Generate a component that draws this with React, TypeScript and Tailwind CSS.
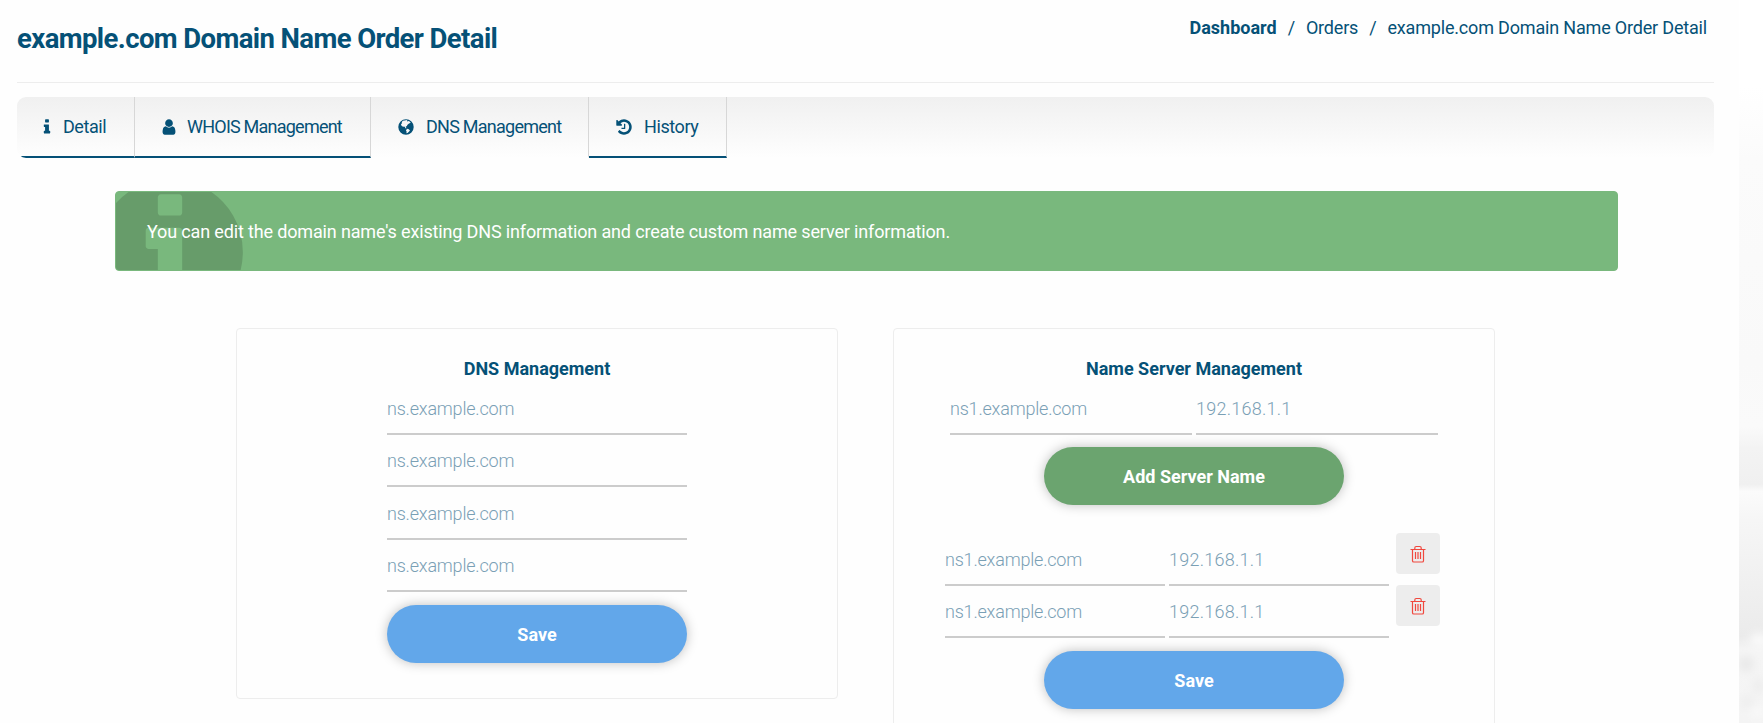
import type { ReactNode } from "react";

type IconProps = { d: string; className?: string };

const ICONS = {
  info: "M1216 1344v128q0 26-19 45t-45 19h-512q-26 0-45-19t-19-45v-128q0-26 19-45t45-19h64v-384h-64q-26 0-45-19t-19-45v-128q0-26 19-45t45-19h384q26 0 45 19t19 45v576h64q26 0 45 19t19 45zm-128-1152v192q0 26-19 45t-45 19h-256q-26 0-45-19t-19-45v-192q0-26 19-45t45-19h256q26 0 45 19t19 45z",
  user: "M1536 1399q0 109-62.5 187t-150.5 78h-854q-88 0-150.5-78t-62.5-187q0-85 8.5-160.5t31.5-152 58.5-131 94-89 134.5-34.5q131 128 313 128t313-128q76 0 134.5 34.5t94 89 58.5 131 31.5 152 8.5 160.5zm-256-887q0 159-112.5 271.5t-271.5 112.5-271.5-112.5-112.5-271.5 112.5-271.5 271.5-112.5 271.5 112.5 112.5 271.5z",
  globe:
    "M896 128a768 768 0 1 1 0 1536a768 768 0 1 1 0-1536zM800 250l-130 10-140 70-60 110 40 90-110 60 20 120 90 110 110 60 90-30 70 50 60 110 70 40 20-90-60-60 20-70 100-20 30-110 110-100 110-70 90-20 40-60-90-40-40-90-110-20-60 60-60-40 20-70-110-40zM1030 1080l-90 60-50 130 70 70-20 180 110-30 130-110 110-140-70-80-90-60z",
  history:
    "M1664 896q0 156-61 298t-164 245-245 164-298 61q-172 0-327-72.5t-264-204.5q-7-10-6.5-22.5t8.5-20.5l137-138q10-9 25-9 16 2 23 12 73 95 179 147t225 52q104 0 198.5-40.5t163.5-109.5 109.5-163.5 40.5-198.5-40.5-198.5-109.5-163.5-163.5-109.5-198.5-40.5q-98 0-188 35.5t-160 101.5l137 138q31 30 14 69-17 40-59 40h-448q-26 0-45-19t-19-45v-448q0-42 40-59 39-17 69 14l130 129q107-101 244.5-156.5t284.5-55.5q156 0 298 61t245 164 164 245 61 298zm-640-288v448q0 14-9 23t-23 9h-320q-14 0-23-9t-9-23v-64q0-14 9-23t23-9h224v-352q0-14 9-23t23-9h64q14 0 23 9t9 23z",
  infoCircle:
    "M1152 1376v-160q0-14-9-23t-23-9h-96v-512q0-14-9-23t-23-9h-320q-14 0-23 9t-9 23v160q0 14 9 23t23 9h96v320h-96q-14 0-23 9t-9 23v160q0 14 9 23t23 9h448q14 0 23-9t9-23zm-128-896v-160q0-14-9-23t-23-9h-192q-14 0-23 9t-9 23v160q0 14 9 23t23 9h192q14 0 23-9t9-23zm640 416q0 209-103 385.5t-279.5 279.5-385.5 103-385.5-103-279.5-279.5-103-385.5 103-385.5 279.5-279.5 385.5-103 385.5 103 279.5 279.5 103 385.5z",
};

function Icon({ d, className = "" }: IconProps) {
  return (
    <svg viewBox="0 0 1792 1792" fill="currentColor" fillRule="evenodd" className={className}>
      <path d={d} />
    </svg>
  );
}

function TrashIcon() {
  return (
    <svg viewBox="0 0 16 18" className="h-[18px] w-4" fill="none" stroke="#f0483e" strokeWidth="1.2">
      <path d="M0.5 4.5h15M4.8 4.3V2.9q0-1.4 1.4-1.4h3.6q1.4 0 1.4 1.4v1.4M2.5 4.5v11.2q0 1.3 1.3 1.3h8.4q1.3 0 1.3-1.3V4.5M5.5 7v7M8 7v7M10.5 7v7" />
    </svg>
  );
}

function Tab({ icon, label, className, active = false }: { icon: string; label: string; className: string; active?: boolean }) {
  return (
    <div
      className={`flex h-[61px] items-start border-b-2 border-r border-r-[#d7d7d7] pt-[18px] text-[18px] leading-6 ${active ? "border-b-transparent" : "border-b-[#055177]"} ${className}`}
    >
      <Icon d={icon} className="mt-[3px] size-[18px] shrink-0" />
      <span className="whitespace-nowrap">{label}</span>
    </div>
  );
}

function Field({ text, className }: { text: string; className: string }) {
  return (
    <input
      placeholder={text}
      className={`block h-12 border-b-2 border-[#cccccc] bg-transparent pb-[3px] text-[18px] font-light outline-none placeholder:text-[#7aa0b5] placeholder:opacity-100 ${className}`}
    />
  );
}

function Button({ children, className }: { children: ReactNode; className: string }) {
  return (
    <button
      className={`mx-auto block h-[58px] w-[300px] rounded-full text-[18px] font-bold text-white shadow-[0_0_12px_rgba(0,0,0,0.25)] ${className}`}
    >
      {children}
    </button>
  );
}

function ServerRow({ className = "" }: { className?: string }) {
  return (
    <div className={`flex ${className}`}>
      <Field text="ns1.example.com" className="mr-1 w-[220px] tracking-[-0.2px]" />
      <Field text="192.168.1.1" className="mr-[7px] w-[220px] tracking-[0.25px]" />
      <button className="-mt-[5px] flex h-[41px] w-11 items-center justify-center rounded bg-[#ededed]">
        <TrashIcon />
      </button>
    </div>
  );
}

function Clouds() {
  return (
    <svg className="h-full w-6 shrink-0" viewBox="0 0 24 723" preserveAspectRatio="none">
      <defs>
        <linearGradient id="sky" x1="0" y1="0" x2="0" y2="1">
          <stop offset="0.12" stopColor="#ffffff" />
          <stop offset="0.22" stopColor="#fbfbfb" />
          <stop offset="0.5" stopColor="#f9f9f9" />
          <stop offset="0.59" stopColor="#fafafa" />
          <stop offset="0.62" stopColor="#f3f3f3" />
          <stop offset="0.67" stopColor="#f0f0f0" />
          <stop offset="0.68" stopColor="#fbfbfb" />
          <stop offset="0.72" stopColor="#f6f6f6" />
          <stop offset="0.88" stopColor="#ebebeb" />
          <stop offset="0.9" stopColor="#f5f5f5" />
          <stop offset="1" stopColor="#f4f4f4" />
        </linearGradient>
        <filter id="soft" x="-50%" y="-50%" width="200%" height="200%">
          <feGaussianBlur stdDeviation="4" />
        </filter>
      </defs>
      <rect width="24" height="723" fill="url(#sky)" />
      <g filter="url(#soft)">
        <ellipse cx="20" cy="640" rx="9" ry="7" fill="#fafafa" />
        <ellipse cx="7" cy="664" rx="8" ry="8" fill="#e9e9e9" />
        <ellipse cx="20" cy="686" rx="7" ry="8" fill="#eeeeee" />
        <ellipse cx="8" cy="702" rx="7" ry="7" fill="#eeeeee" />
        <ellipse cx="18" cy="712" rx="7" ry="6" fill="#f9f9f9" />
      </g>
    </svg>
  );
}

export default function App() {
  return (
    <div className="flex h-[723px] w-full overflow-hidden bg-white font-[Roboto,sans-serif] text-[#055177]">
      <main className="min-w-0 flex-1 bg-[#fefefe] pl-[17px] pr-[25px]">
        <header className="flex h-[83px] items-start justify-between border-b border-[#ededed] pr-[7px]">
          <h1 className="mt-[21px] whitespace-nowrap text-[27.5px] font-bold leading-9 tracking-[-0.6px]">
            example.com Domain Name Order Detail
          </h1>
          <nav className="mt-4 flex whitespace-nowrap text-[18px] leading-6 tracking-[-0.18px]">
            <span className="font-bold tracking-normal">Dashboard</span>
            <span className="mx-[11px]">/</span>
            <span>Orders</span>
            <span className="mx-[11px]">/</span>
            <span>example.com Domain Name Order Detail</span>
          </nav>
        </header>

        <div className="mt-[14px] flex h-[61px] overflow-hidden rounded-[9px] bg-linear-to-b from-[#f0f0f0] to-[#fefefe]">
          <Tab icon={ICONS.info} label="Detail" className="w-[118px] gap-[7px] pl-[21px] tracking-[-0.45px]" />
          <Tab icon={ICONS.user} label="WHOIS Management" className="w-[236px] gap-[9px] pl-[25px] tracking-[-0.77px]" />
          <Tab icon={ICONS.globe} label="DNS Management" className="w-[218px] gap-[11px] pl-[26px] tracking-[-0.75px]" active />
          <Tab icon={ICONS.history} label="History" className="w-[138px] gap-[11px] pl-[26px] tracking-[-0.4px]" />
        </div>

        <div className="relative ml-[98px] mt-[33px] h-20 w-[1503px] overflow-hidden rounded border border-[#79b87d] bg-[#79b87d]">
          <Icon d={ICONS.infoCircle} className="absolute -left-[31px] -top-[25px] size-[170px] text-black/15" />
          <p className="relative mt-[28px] whitespace-nowrap pl-[31px] text-[18px] leading-6 tracking-[-0.15px] text-white">
            You can edit the domain name's existing DNS information and create custom name server information.
          </p>
        </div>

        <div className="ml-[219px] mt-[57px] flex items-start gap-[55px]">
          <section className="h-[371px] w-[602px] rounded border border-[#ededed] pt-[28px]">
            <h2 className="text-center text-[18px] font-bold leading-6">DNS Management</h2>
            <div className="mx-auto mt-[6px] flex w-[300px] flex-col tracking-[-0.2px]">
              <Field text="ns.example.com" className="w-full" />
              <Field text="ns.example.com" className="mt-1 w-full" />
              <Field text="ns.example.com" className="mt-[5px] w-full" />
              <Field text="ns.example.com" className="mt-1 w-full" />
            </div>
            <Button className="mt-[13px] bg-[#62a7ea]">Save</Button>
          </section>

          <section className="h-[440px] w-[602px] shrink-0 rounded border border-[#ededed] pt-[28px]">
            <h2 className="text-center text-[18px] font-bold leading-6">Name Server Management</h2>
            <div className="mt-[6px] flex justify-center gap-1">
              <Field text="ns1.example.com" className="w-[242px] tracking-[-0.2px]" />
              <Field text="192.168.1.1" className="w-[242px] tracking-[0.25px]" />
            </div>
            <Button className="mt-3 bg-[#6ba46f]">Add Server Name</Button>
            <div className="mt-[33px] pl-[51px]">
              <ServerRow />
              <ServerRow className="mt-1" />
            </div>
            <Button className="mt-[13px] bg-[#62a7ea]">Save</Button>
          </section>
        </div>
      </main>
      <Clouds />
    </div>
  );
}
